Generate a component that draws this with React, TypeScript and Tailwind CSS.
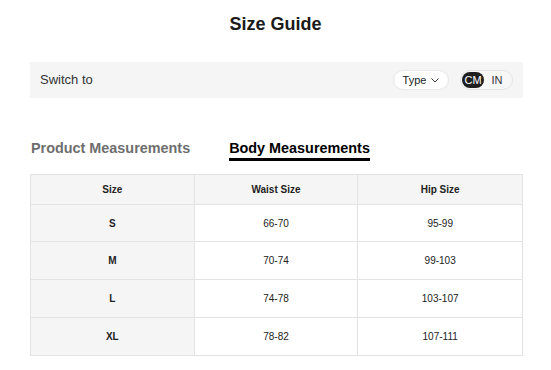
export default function App() {
  const rows = [
    { size: "S", waist: "66-70", hip: "95-99", h: "h-[37px]" },
    { size: "M", waist: "70-74", hip: "99-103", h: "h-[38px]" },
    { size: "L", waist: "74-78", hip: "103-107", h: "h-[38px]" },
    { size: "XL", waist: "78-82", hip: "107-111", h: "h-[37px]" },
  ];

  return (
    <div className="w-[551px] h-[370px] overflow-hidden bg-white font-['Liberation_Sans',Arial,sans-serif] text-[#222]">
      <h1 className="pt-[13px] text-center text-[18px] leading-[22px] font-bold text-[#1a1a1a]">Size Guide</h1>

      <div className="ml-[30px] w-[493px]">
        {/* switch bar */}
        <div className="mt-[27px] h-[36px] bg-[#f5f5f5] flex items-center justify-between pl-[10px] pr-[10px]">
          <span className="text-[13px] text-[#333]">Switch to</span>
          <div className="flex items-center gap-[11px]">
            <button className="w-[56px] h-[20px] rounded-full bg-white border border-[#e8e8e8] flex items-center justify-center gap-[5px] text-[11px] text-[#222]">
              <span>Type</span>
              <svg width="8" height="5" viewBox="0 0 8 5" fill="none">
                <path d="M0.5 0.5 L4 4 L7.5 0.5" stroke="#333" strokeWidth="1" />
              </svg>
            </button>
            <div className="w-[53px] h-[20px] rounded-full bg-[#f7f7f7] border border-[#e5e5e5] flex items-center pl-[1px]">
              <span className="w-[22px] h-[16px] rounded-full bg-[#1f1f1f] text-white text-[11px] flex items-center justify-center">CM</span>
              <span className="flex-1 text-center text-[11px] text-[#333] pr-[2px]">IN</span>
            </div>
          </div>
        </div>

        {/* tabs */}
        <div className="mt-[41px] flex gap-[39px] text-[14.4px] leading-[18px] font-bold pl-[1px]">
          <span className="text-[#6e6e6e]">Product Measurements</span>
          <div className="flex flex-col">
            <span className="text-black">Body Measurements</span>
            <div className="mt-[1px] h-[3px] bg-black" />
          </div>
        </div>

        {/* table */}
        <div className="mt-[13px] border border-[#e3e3e3] text-[10px]">
          <div className="grid grid-cols-3 h-[30px] bg-[#f5f5f5] border-b border-[#e3e3e3] font-bold">
            <div className="flex items-center justify-center border-r border-[#e3e3e3]">Size</div>
            <div className="flex items-center justify-center border-r border-[#e3e3e3]">Waist Size</div>
            <div className="flex items-center justify-center">Hip Size</div>
          </div>
          {rows.map((r, i) => (
            <div
              key={r.size}
              className={`grid grid-cols-3 ${r.h} ${i < rows.length - 1 ? "border-b border-[#e3e3e3]" : ""}`}
            >
              <div className="flex items-center justify-center bg-[#f5f5f5] border-r border-[#e3e3e3] font-bold">{r.size}</div>
              <div className="flex items-center justify-center border-r border-[#e3e3e3]">{r.waist}</div>
              <div className="flex items-center justify-center">{r.hip}</div>
            </div>
          ))}
        </div>

        <p className="mt-[11px] text-[10px] text-[#999]">
          *Depending on your body type and dressing habits, the above sizes are for reference only.
        </p>
      </div>
    </div>
  );
}
